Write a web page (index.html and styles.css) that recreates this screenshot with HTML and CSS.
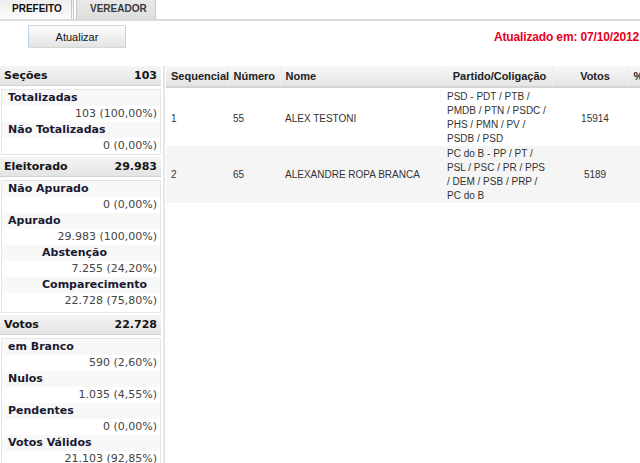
FILE: index.html
```html
<!DOCTYPE html>
<html lang="pt-BR">
<head>
<meta charset="utf-8">
<title>Apuração</title>
<link rel="stylesheet" href="styles.css">
</head>
<body>
<div class="tabs">
  <div class="tab tab-active">PREFEITO</div>
  <div class="tab">VEREADOR</div>
</div>
<div class="toolbar">
  <button class="btn" type="button">Atualizar</button>
  <span class="updated">Atualizado em: 07/10/2012</span>
</div>
<div class="main">
  <aside class="summary">
    <div class="sum-head"><span>Seções</span><span>103</span></div>
    <div class="sum-box">
      <div class="lbl">Totalizadas</div>
      <div class="val">103 (100,00%)</div>
      <div class="lbl">Não Totalizadas</div>
      <div class="val">0 (0,00%)</div>
    </div>
    <div class="sum-head"><span>Eleitorado</span><span>29.983</span></div>
    <div class="sum-box">
      <div class="lbl">Não Apurado</div>
      <div class="val">0 (0,00%)</div>
      <div class="lbl">Apurado</div>
      <div class="val">29.983 (100,00%)</div>
      <div class="sub-group">
        <div class="lbl lbl-sub">Abstenção</div>
        <div class="val">7.255 (24,20%)</div>
        <div class="lbl lbl-sub">Comparecimento</div>
        <div class="val">22.728 (75,80%)</div>
      </div>
    </div>
    <div class="sum-head"><span>Votos</span><span>22.728</span></div>
    <div class="sum-box">
      <div class="lbl">em Branco</div>
      <div class="val">590 (2,60%)</div>
      <div class="lbl">Nulos</div>
      <div class="val">1.035 (4,55%)</div>
      <div class="lbl">Pendentes</div>
      <div class="val">0 (0,00%)</div>
      <div class="lbl">Votos Válidos</div>
      <div class="val">21.103 (92,85%)</div>
    </div>
  </aside>
  <section class="results">
    <table class="grid">
      <colgroup>
        <col class="c-seq"><col class="c-num"><col class="c-nome"><col class="c-part"><col class="c-votos"><col class="c-pct">
      </colgroup>
      <thead>
        <tr>
          <th>Sequencial</th>
          <th>Número</th>
          <th>Nome</th>
          <th class="center">Partido/Coligação</th>
          <th class="center votos">Votos</th>
          <th>%</th>
        </tr>
      </thead>
      <tbody>
        <tr class="first">
          <td>1</td>
          <td>55</td>
          <td>ALEX TESTONI</td>
          <td class="party">PSD - PDT / PTB /<br>PMDB / PTN / PSDC /<br>PHS / PMN / PV /<br>PSDB / PSD</td>
          <td class="center votos">15914</td>
          <td></td>
        </tr>
        <tr class="alt">
          <td>2</td>
          <td>65</td>
          <td>ALEXANDRE ROPA BRANCA</td>
          <td class="party">PC do B - PP / PT /<br>PSL / PSC / PR / PPS<br>/ DEM / PSB / PRP /<br>PC do B</td>
          <td class="center votos">5189</td>
          <td></td>
        </tr>
      </tbody>
    </table>
  </section>
</div>
</body>
</html>
```

FILE: styles.css
```css
html, body {
  margin: 0;
  padding: 0;
  background: #ffffff;
}
body {
  width: 640px;
  height: 463px;
  overflow: hidden;
  font-family: "Liberation Sans", Arial, sans-serif;
  color: #333;
}

/* Tabs */
.tabs {
  display: flex;
  height: 19px;
  border-bottom: 2px solid #dcdcdc;
}
.tab {
  box-sizing: border-box;
  height: 19px;
  line-height: 18px;
  font-size: 10px;
  font-weight: bold;
  color: #3a3a3a;
  padding: 0 11px 0 13px;
  width: 80px;
  margin-left: 2px;
  background: linear-gradient(#e9e9e9, #dedede);
  border: 1px solid #c6c6c6;
  border-top: 0;
  border-bottom: 0;
}
.tab-active {
  width: 74px;
  margin-left: 0;
  padding-left: 12px;
  color: #111;
  background: linear-gradient(#eeeeee, #fbfbfb);
  border-left: 0;
  border-right: 3px double #c8c8c8;
}

/* Toolbar */
.toolbar {
  display: flex;
  align-items: flex-start;
  justify-content: space-between;
  height: 41px;
  padding-top: 4px;
}
.btn {
  margin-left: 28px;
  width: 98px;
  height: 23px;
  padding: 0;
  font-family: "Liberation Sans", Arial, sans-serif;
  font-size: 11px;
  color: #111;
  background: linear-gradient(#fdfdfd, #e4e4e4);
  border: 1px solid #d6d6d6;
  border-left-color: #bdd0e2;
  border-right-color: #bdd0e2;
  border-radius: 1px;
}
.updated {
  margin-top: 5px;
  margin-right: 1px;
  font-size: 12px;
  font-weight: bold;
  color: #e5001c;
  letter-spacing: -0.15px;
}

/* Main */
.main {
  display: flex;
  height: 397px;
}

/* Summary */
.summary {
  width: 163px;
  flex: none;
  font-family: "DejaVu Sans", Verdana, sans-serif;
  font-size: 11px;
}
.sum-head {
  display: flex;
  justify-content: space-between;
  height: 20px;
  line-height: 20px;
  padding: 0 4px 0 4px;
  margin-right: 2px;
  font-weight: bold;
  color: #141414;
  background: linear-gradient(#f5f5f5, #e3e3e3);
  border-bottom: 1px solid #d2d2d2;
  box-sizing: border-box;
}
.sum-box {
  margin: 3px 2px 2px 1px;
  border: 1px solid #e6e6e6;
}
.lbl, .val {
  height: 16px;
  line-height: 16px;
  white-space: nowrap;
}
.lbl {
  padding-left: 6px;
  font-weight: bold;
  color: #1a1a33;
  background: #f8f8f8;
}
.lbl-sub {
  padding-left: 40px;
}
.val {
  text-align: right;
  padding-right: 3px;
  color: #444;
  background: #ffffff;
}
.sub-group {
  padding-bottom: 3px;
}

/* Results table */
.results {
  flex: 1;
  overflow: hidden;
  border-left: 2px solid #e6e6e6;
  padding-left: 1px;
}
.grid {
  border-collapse: collapse;
  table-layout: fixed;
  width: 500px;
  font-size: 10px;
}
.c-seq { width: 62px; }
.c-num { width: 52px; }
.c-nome { width: 162px; }
.c-part { width: 110px; }
.c-votos { width: 76px; }
.c-pct { width: 38px; }

.grid th {
  height: 20px;
  padding: 0 0 0 5px;
  text-align: left;
  font-size: 11px;
  font-weight: bold;
  color: #222;
  white-space: nowrap;
  background: linear-gradient(#f7f7f7, #e4e4e4);
  border-bottom: 2px solid #d4d4d4;
  border-right: 1px solid #eeeeee;
}
.grid th.center, .grid td.center {
  text-align: center;
}
.grid .votos {
  padding-left: 10px;
}
.grid td {
  height: 57px;
  padding: 0 0 0 5px;
  vertical-align: middle;
  color: #333;
  white-space: nowrap;
}
.grid tr.first td {
  height: 55px;
  padding-top: 2px;
}
.grid td.party {
  line-height: 14px;
}
.grid tr.alt td {
  background: #f5f5f5;
}
```
